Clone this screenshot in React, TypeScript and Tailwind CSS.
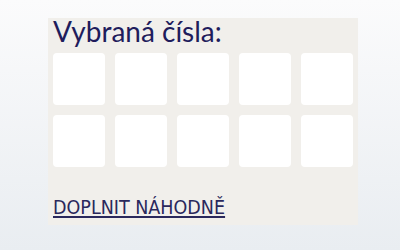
export default function App() {
  const cells = Array.from({ length: 10 });
  return (
    <div className="w-[400px] h-[250px] bg-gradient-to-b from-[#fbfbfc] to-[#e9edf1] pt-[18px] pl-[48px]">
      <div className="w-[310px] h-[207px] bg-[#f1efeb] pl-[5px] pt-[1px] flex flex-col">
        <div className="text-[28px] leading-[24px] text-[#1f1c5c] font-['Lato',sans-serif]">
          Vybraná čísla:
        </div>
        <div className="grid grid-cols-5 gap-[10px] w-[300px] mt-[10px]">
          {cells.map((_, i) => (
            <div key={i} className="h-[52px] bg-white rounded-[4px]" />
          ))}
        </div>
        <div className="mt-[31px] leading-[20px]">
          <a className="text-[19.5px] leading-[20px] text-[#2a285c] underline decoration-[2px] underline-offset-[2px] font-['DejaVu_Sans_Condensed','DejaVu_Sans',sans-serif]">
            DOPLNIT NÁHODNĚ
          </a>
        </div>
      </div>
    </div>
  );
}
